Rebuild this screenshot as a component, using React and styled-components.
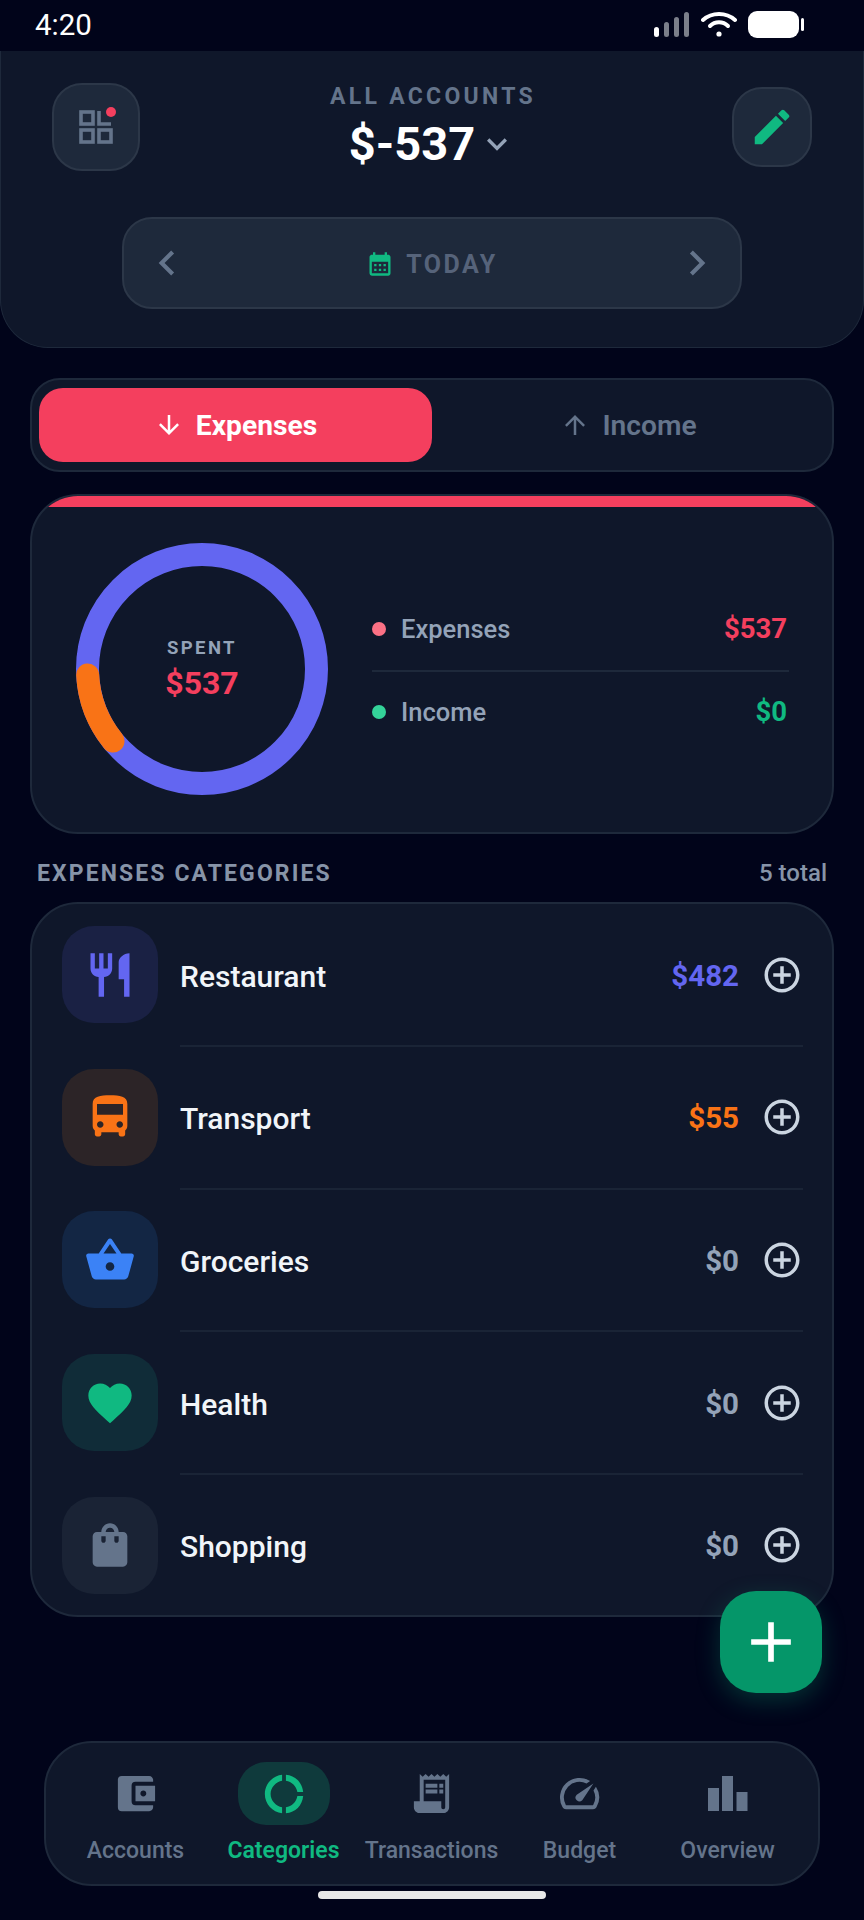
import { createGlobalStyle } from "styled-components";
import styled from "styled-components";
import {
  MdRestaurant,
  MdDirectionsBus,
  MdShoppingBasket,
  MdFavorite,
  MdShoppingBag,
  MdEdit,
  MdCalendarMonth,
  MdChevronLeft,
  MdChevronRight,
  MdKeyboardArrowDown,
  MdArrowDownward,
  MdArrowUpward,
  MdAccountBalanceWallet,
  MdDonutLarge,
  MdReceiptLong,
  MdOutlineSpeed,
  MdAdd,
  MdAddCircleOutline,
} from "react-icons/md";

const GlobalStyle = createGlobalStyle`
  html, body {
    margin: 0;
    background: #01041a;
  }
  * {
    box-sizing: border-box;
  }
`;

const Page = styled.div`
  position: relative;
  width: 864px;
  height: 1920px;
  overflow: hidden;
  background: #01041a;
  font-family: Roboto, "Liberation Sans", sans-serif;
`;

const StatusBar = styled.div`
  height: 51px;
  padding: 0 60px 2px 35px;
  display: flex;
  align-items: center;
  justify-content: space-between;
  color: #fff;
  font-size: 29.5px;
`;

const StatusIcons = styled.div`
  display: flex;
  align-items: center;
  gap: 11px;
`;

const Header = styled.header`
  height: 297px;
  background: #0f172a;
  border-bottom: 1px solid #1e293b;
  border-left: 1px solid #1e293b;
  border-right: 1px solid #1e293b;
  border-radius: 0 0 48px 48px;
  padding: 32px 51px 0 51px;
  display: flex;
  flex-direction: column;
`;

const HeaderTop = styled.div`
  display: flex;
  align-items: flex-start;
  justify-content: space-between;
`;

const IconButton = styled.div`
  position: relative;
  width: ${(p) => p.$size}px;
  height: ${(p) => p.$size}px;
  margin-top: ${(p) => p.$top}px;
  border-radius: 30px;
  background: #1e293b;
  border: 2px solid #2c3748;
  display: flex;
  align-items: center;
  justify-content: center;
  color: ${(p) => p.$color};
`;

const Dot = styled.span`
  position: absolute;
  top: 22px;
  right: 22px;
  width: 10px;
  height: 10px;
  border-radius: 50%;
  background: #f43f5e;
`;

const Balance = styled.div`
  display: flex;
  flex-direction: column;
  align-items: center;
  margin-right: 6px;
`;

const BalanceLabel = styled.div`
  color: #64748b;
  font-size: 23px;
  font-weight: 700;
  letter-spacing: 3.3px;
  line-height: 24px;
  margin-top: 2px;
`;

const BalanceRow = styled.div`
  display: flex;
  align-items: center;
  gap: 2px;
  color: #fff;
  font-size: 47px;
  font-weight: 700;
  line-height: 54px;
  margin-top: 8px;
  svg {
    color: #94a3b8;
  }
`;

const DatePill = styled.div`
  width: 620px;
  height: 92px;
  margin: 46px auto 0;
  padding: 0 18px;
  background: #1e293b;
  border: 2px solid #2c3748;
  border-radius: 30px;
  display: flex;
  align-items: center;
  justify-content: space-between;
  color: #64748b;
`;

const DateLabel = styled.div`
  display: flex;
  align-items: center;
  gap: 12px;
  margin-top: 2px;
  color: #56637a;
  font-size: 25px;
  font-weight: 700;
  letter-spacing: 2.5px;
  svg {
    color: #10b981;
  }
`;

const Tabs = styled.div`
  height: 94px;
  margin: 30px 30px 0;
  padding: 8px 7px;
  background: #0f172a;
  border: 2px solid #1e293b;
  border-radius: 30px;
  display: grid;
  grid-template-columns: 393px 1fr;
`;

const Tab = styled.div`
  display: flex;
  align-items: center;
  justify-content: center;
  gap: 12px;
  height: 74px;
  border-radius: 24px;
  font-size: 28.2px;
  font-weight: ${(p) => (p.$active ? 700 : 600)};
  color: ${(p) => (p.$active ? "#fff" : "#64748b")};
  background: ${(p) => (p.$active ? "#f43f5e" : "transparent")};
`;

const Summary = styled.section`
  position: relative;
  height: 340px;
  margin: 22px 30px 0;
  padding: 0 43px 0 44px;
  background: #0f172a;
  border: 2px solid #1e293b;
  border-radius: 48px;
  overflow: hidden;
  display: flex;
  align-items: center;
  gap: 44px;
`;

const Stripe = styled.div`
  position: absolute;
  top: 0;
  left: 0;
  right: 0;
  height: 11px;
  background: #f43f5e;
`;

const Donut = styled.div`
  position: relative;
  width: 252px;
  height: 252px;
  flex: none;
  margin-top: 10px;
`;

const DonutCenter = styled.div`
  position: absolute;
  inset: 0;
  display: flex;
  flex-direction: column;
  align-items: center;
  justify-content: center;
`;

const DonutLabel = styled.div`
  color: #94a3b8;
  font-size: 18.5px;
  font-weight: 700;
  letter-spacing: 2.4px;
  line-height: 22px;
  margin-top: 1px;
`;

const DonutValue = styled.div`
  color: #f43f5e;
  font-size: 32px;
  font-weight: 700;
  line-height: 38px;
  margin-top: 5px;
`;

const Legend = styled.div`
  flex: 1;
  margin-top: 11px;
`;

const LegendRow = styled.div`
  height: 82px;
  display: flex;
  align-items: center;
  gap: 15px;
  border-top: ${(p) => (p.$divided ? "2px solid #1e293b" : "none")};
`;

const LegendDot = styled.span`
  width: 14px;
  height: 14px;
  border-radius: 50%;
  background: ${(p) => p.$color};
`;

const LegendName = styled.span`
  flex: 1;
  color: #94a3b8;
  font-size: 25.5px;
  font-weight: 500;
`;

const LegendValue = styled.span`
  color: ${(p) => p.$color};
  font-size: 27.5px;
  font-weight: 700;
  margin-right: 2px;
`;

const SectionHead = styled.div`
  height: 24px;
  margin: 27px 37px 0;
  display: flex;
  align-items: center;
  justify-content: space-between;
`;

const SectionTitle = styled.div`
  color: #8794a8;
  font-size: 23px;
  font-weight: 700;
  letter-spacing: 2.1px;
`;

const SectionCount = styled.div`
  color: #8794a8;
  font-size: 24px;
  font-weight: 500;
`;

const CategoryCard = styled.section`
  height: 715px;
  margin: 17px 30px 0;
  padding: 22px 29px 0 30px;
  background: #0f172a;
  border: 2px solid #1e293b;
  border-radius: 48px;
`;

const CategoryRow = styled.div`
  position: relative;
  height: 142.7px;
  display: flex;
  align-items: flex-start;
  &:not(:last-child)::after {
    content: "";
    position: absolute;
    left: 118px;
    right: 0;
    top: 119px;
    height: 2px;
    background: #1a2436;
  }
`;

const CategoryIcon = styled.div`
  width: 96px;
  height: 97px;
  border-radius: 32px;
  flex: none;
  display: flex;
  align-items: center;
  justify-content: center;
  background: ${(p) => p.$bg};
  color: ${(p) => p.$color};
`;

const CategoryName = styled.div`
  flex: 1;
  margin-left: 22px;
  height: 97px;
  padding-top: 3px;
  display: flex;
  align-items: center;
  color: #f1f5f9;
  font-size: 30px;
  font-weight: 500;
`;

const CategoryAmount = styled.div`
  height: 97px;
  padding-top: 2px;
  display: flex;
  align-items: center;
  color: ${(p) => p.$color};
  font-size: 29.5px;
  font-weight: 700;
`;

const AddButton = styled.div`
  width: 42px;
  height: 97px;
  margin-left: 22px;
  display: flex;
  align-items: center;
  justify-content: center;
  color: #cbd5e1;
`;

const Fab = styled.div`
  position: absolute;
  left: 720px;
  top: 1591px;
  width: 102px;
  height: 102px;
  border-radius: 36px;
  background: #059669;
  box-shadow: 0 8px 24px rgba(16, 185, 129, 0.25);
  display: flex;
  align-items: center;
  justify-content: center;
  color: #fff;
`;

const Nav = styled.nav`
  position: absolute;
  left: 44px;
  right: 44px;
  bottom: 34px;
  height: 145px;
  background: #0f172a;
  border: 2px solid #1e293b;
  border-radius: 48px;
  padding: 19px 0 0 15.5px;
  display: grid;
  grid-template-columns: repeat(5, 148px);
`;

const NavItem = styled.div`
  display: flex;
  flex-direction: column;
  align-items: center;
  color: ${(p) => (p.$active ? "#10b981" : "#64748b")};
  font-size: 23px;
  font-weight: ${(p) => (p.$active ? 600 : 500)};
`;

const NavIcon = styled.div`
  width: 92px;
  height: 63px;
  border-radius: 28px;
  display: flex;
  align-items: center;
  justify-content: center;
  background: ${(p) => (p.$active ? "#0f3a3c" : "transparent")};
`;

const NavLabel = styled.div`
  line-height: 26px;
  margin-top: 13px;
  white-space: nowrap;
`;

const HomeBar = styled.div`
  position: absolute;
  left: 318px;
  bottom: 21px;
  width: 228px;
  height: 8px;
  border-radius: 4px;
  background: #e8e8e8;
`;

const SignalIcon = () => (
  <svg width="36" height="26" viewBox="0 0 36 26">
    <rect x="0" y="15" width="5" height="10" rx="2.5" fill="#fff" />
    <rect x="10" y="10" width="5" height="15" rx="2.5" fill="#7b7f8a" />
    <rect x="20" y="5" width="5" height="20" rx="2.5" fill="#7b7f8a" />
    <rect x="30" y="0" width="5" height="25" rx="2.5" fill="#7b7f8a" />
  </svg>
);

const WifiIcon = () => (
  <svg width="36" height="26" viewBox="0 0 36 26" fill="none" stroke="#fff" strokeWidth="4" strokeLinecap="round">
    <path d="M2 8 C11 0 25 0 34 8" />
    <path d="M9 14 C14 9 22 9 27 14" />
    <circle cx="18" cy="22" r="2.6" fill="#fff" stroke="none" />
  </svg>
);

const BatteryIcon = () => (
  <svg width="56" height="28" viewBox="0 0 56 28">
    <rect x="0" y="0" width="51" height="27" rx="9" fill="#fff" />
    <rect x="53" y="7" width="3" height="13" rx="1.5" fill="#fff" />
  </svg>
);

const ScanIcon = () => (
  <svg width="34" height="34" viewBox="0 0 34 34" fill="none" stroke="#64748b" strokeWidth="3.6">
    <rect x="2" y="2" width="12" height="12" />
    <path d="M20 1 V14 H32" />
    <rect x="2" y="20" width="12" height="12" />
    <rect x="20" y="20" width="12" height="12" />
  </svg>
);

const BarsIcon = () => (
  <svg width="40" height="35" viewBox="0 0 40 35" fill="#64748b">
    <rect x="0" y="12" width="11" height="23" />
    <rect x="14" y="0" width="11" height="35" />
    <rect x="28.5" y="16" width="11" height="19" />
  </svg>
);

const R = 114.5;
const C = 2 * Math.PI * R;

const Ring = () => (
  <svg width="252" height="252" viewBox="0 0 252 252" fill="none" strokeWidth="23">
    <circle cx="126" cy="126" r={R} stroke="#6366f1" />
    <circle
      cx="126"
      cy="126"
      r={R}
      stroke="#f97316"
      strokeLinecap="round"
      strokeDasharray={`${C * 0.1} ${C}`}
      transform="rotate(141 126 126)"
    />
  </svg>
);

const categories = [
  { name: "Restaurant", amount: "$482", amountColor: "#6366f1", color: "#6366f1", bg: "#1a2144", Icon: MdRestaurant },
  { name: "Transport", amount: "$55", amountColor: "#f97316", color: "#f97316", bg: "#2c2427", Icon: MdDirectionsBus },
  { name: "Groceries", amount: "$0", amountColor: "#94a3b8", color: "#3b82f6", bg: "#132644", Icon: MdShoppingBasket },
  { name: "Health", amount: "$0", amountColor: "#94a3b8", color: "#10b981", bg: "#102c38", Icon: MdFavorite },
  { name: "Shopping", amount: "$0", amountColor: "#94a3b8", color: "#64748b", bg: "#1a2335", Icon: MdShoppingBag },
];

const navItems = [
  { label: "Accounts", icon: <MdAccountBalanceWallet size={47} /> },
  { label: "Categories", icon: <MdDonutLarge size={46} />, active: true },
  { label: "Transactions", icon: <MdReceiptLong size={47} /> },
  { label: "Budget", icon: <MdOutlineSpeed size={47} /> },
  { label: "Overview", icon: <BarsIcon /> },
];

export default function App() {
  return (
    <Page>
      <GlobalStyle />
      <StatusBar>
        <span>4:20</span>
        <StatusIcons>
          <SignalIcon />
          <WifiIcon />
          <BatteryIcon />
        </StatusIcons>
      </StatusBar>

      <Header>
        <HeaderTop>
          <IconButton $size={88} $top={0} $color="#64748b">
            <ScanIcon />
            <Dot />
          </IconButton>
          <Balance>
            <BalanceLabel>ALL ACCOUNTS</BalanceLabel>
            <BalanceRow>
              $-537
              <MdKeyboardArrowDown size={40} />
            </BalanceRow>
          </Balance>
          <IconButton $size={80} $top={4} $color="#10b981">
            <MdEdit size={46} />
          </IconButton>
        </HeaderTop>
        <DatePill>
          <MdChevronLeft size={50} />
          <DateLabel>
            <MdCalendarMonth size={28} />
            TODAY
          </DateLabel>
          <MdChevronRight size={50} />
        </DatePill>
      </Header>

      <Tabs>
        <Tab $active>
          <MdArrowDownward size={30} />
          Expenses
        </Tab>
        <Tab>
          <MdArrowUpward size={30} />
          Income
        </Tab>
      </Tabs>

      <Summary>
        <Stripe />
        <Donut>
          <Ring />
          <DonutCenter>
            <DonutLabel>SPENT</DonutLabel>
            <DonutValue>$537</DonutValue>
          </DonutCenter>
        </Donut>
        <Legend>
          <LegendRow>
            <LegendDot $color="#fb7185" />
            <LegendName>Expenses</LegendName>
            <LegendValue $color="#f43f5e">$537</LegendValue>
          </LegendRow>
          <LegendRow $divided>
            <LegendDot $color="#34d399" />
            <LegendName>Income</LegendName>
            <LegendValue $color="#10b981">$0</LegendValue>
          </LegendRow>
        </Legend>
      </Summary>

      <SectionHead>
        <SectionTitle>EXPENSES CATEGORIES</SectionTitle>
        <SectionCount>5 total</SectionCount>
      </SectionHead>

      <CategoryCard>
        {categories.map(({ name, amount, amountColor, color, bg, Icon }) => (
          <CategoryRow key={name}>
            <CategoryIcon $bg={bg} $color={color}>
              <Icon size={52} />
            </CategoryIcon>
            <CategoryName>{name}</CategoryName>
            <CategoryAmount $color={amountColor}>{amount}</CategoryAmount>
            <AddButton>
              <MdAddCircleOutline size={42} />
            </AddButton>
          </CategoryRow>
        ))}
      </CategoryCard>

      <Fab>
        <MdAdd size={68} />
      </Fab>

      <Nav>
        {navItems.map(({ label, icon, active }) => (
          <NavItem key={label} $active={active}>
            <NavIcon $active={active}>{icon}</NavIcon>
            <NavLabel>{label}</NavLabel>
          </NavItem>
        ))}
      </Nav>
      <HomeBar />
    </Page>
  );
}
